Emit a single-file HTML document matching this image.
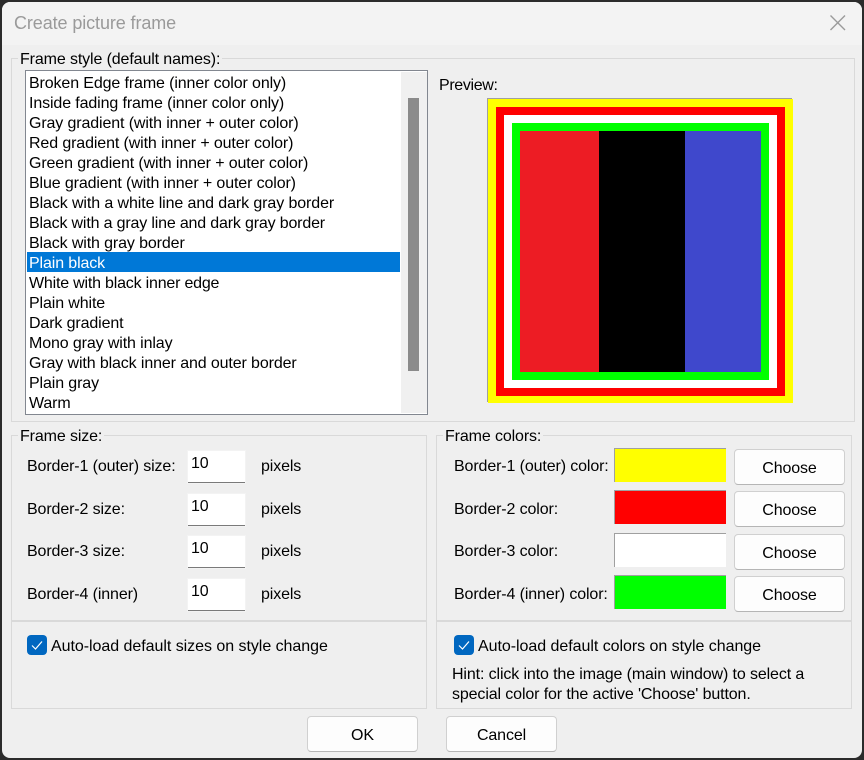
<!DOCTYPE html>
<html><head><meta charset="utf-8"><style>
html,body{margin:0;padding:0;width:864px;height:760px;overflow:hidden;background:#2b2b2b}
*{box-sizing:border-box}
.a{position:absolute}
.t{position:absolute;font:16px/20px "Liberation Sans",sans-serif;letter-spacing:-0.12px;color:#000;white-space:nowrap}
#win{position:absolute;left:2px;top:2px;width:860px;height:756px;background:#efefef;border-radius:8px;overflow:hidden}
.g{position:absolute;border:1px solid #d9d9d9}
.leg{position:absolute;background:#efefef;padding:0 2px 0 2px;font:16px/20px "Liberation Sans",sans-serif;letter-spacing:-0.12px;white-space:nowrap}
.e{position:absolute;width:57px;height:32px;background:#fff;border-bottom:1px solid #7a7a7a;font:16px/20px "Liberation Sans",sans-serif;letter-spacing:-0.12px;padding:3px 0 0 3px;box-shadow:0 0 0 1px #f3f3f3}
.c{position:absolute;left:614px;width:112px;height:34px;border-top:1px solid #a0a0a0;border-left:1px solid #a0a0a0}
.b{position:absolute;background:#fdfdfd;border:1px solid #d0d0d0;border-bottom-color:#b5b5b5;border-radius:4px;width:111px;height:36px;text-align:center;font:16px/36px "Liberation Sans",sans-serif;letter-spacing:-0.12px;padding-top:1px}
.k{position:absolute;width:20px;height:20px;background:#0067c0;border-radius:4px}
</style></head><body>
<div id="win" style="left:2px;top:2px"></div>
<div class="a" style="left:2px;top:2px;width:860px;height:43px;background:#f3f3f3;border-radius:8px 8px 0 0"></div>
<div class="t" style="left:14px;top:13px;font-size:18px;color:#9a9a9a;letter-spacing:-0.1px">Create picture frame</div>
<svg class="a" style="left:829px;top:14px" width="18" height="18"><path d="M1.5 1.5L16 16M16 1.5L1.5 16" stroke="#9a9a9a" stroke-width="1.4" fill="none"/></svg>

<div class="g" style="left:11px;top:58px;width:844px;height:364px"></div>
<div class="leg" style="left:18px;top:50px">Frame style (default names):</div>

<div class="a" style="left:25px;top:70px;width:403px;height:345px;background:#fff;border:1px solid #828790"></div>
<div class="a" style="left:401px;top:72px;width:26px;height:341px;background:#f0f0f0"></div>
<div class="a" style="left:408px;top:98px;width:11px;height:273px;background:#8b8b8b"></div>
<div class="a" style="left:27px;top:252px;width:373px;height:20px;background:#0078d7"></div>
<div class="t" style="left:29px;top:74px">Broken Edge frame (inner color only)</div>
<div class="t" style="left:29px;top:94px">Inside fading frame (inner color only)</div>
<div class="t" style="left:29px;top:114px">Gray gradient (with inner + outer color)</div>
<div class="t" style="left:29px;top:134px">Red gradient (with inner + outer color)</div>
<div class="t" style="left:29px;top:154px">Green gradient (with inner + outer color)</div>
<div class="t" style="left:29px;top:174px">Blue gradient (with inner + outer color)</div>
<div class="t" style="left:29px;top:194px;letter-spacing:-0.1px">Black with a white line and dark gray border</div>
<div class="t" style="left:29px;top:214px;letter-spacing:-0.17px">Black with a gray line and dark gray border</div>
<div class="t" style="left:29px;top:234px">Black with gray border</div>
<div class="t" style="left:29px;top:254px;color:#fff">Plain black</div>
<div class="t" style="left:29px;top:274px;letter-spacing:-0.2px">White with black inner edge</div>
<div class="t" style="left:29px;top:294px">Plain white</div>
<div class="t" style="left:29px;top:314px">Dark gradient</div>
<div class="t" style="left:29px;top:334px">Mono gray with inlay</div>
<div class="t" style="left:29px;top:354px">Gray with black inner and outer border</div>
<div class="t" style="left:29px;top:374px">Plain gray</div>
<div class="t" style="left:29px;top:394px">Warm</div>

<div class="t" style="left:439px;top:76px;letter-spacing:-0.35px">Preview:</div>
<div class="a" style="left:487px;top:98px;width:305px;height:1px;background:#a0a0a0"></div>
<div class="a" style="left:487px;top:98px;width:1px;height:304px;background:#a0a0a0"></div>
<div class="a" style="left:488px;top:99px;width:305px;height:304px;background:#ff0"></div>
<div class="a" style="left:496px;top:107px;width:289px;height:289px;background:#f00"></div>
<div class="a" style="left:504px;top:115px;width:273px;height:273px;background:#fff"></div>
<div class="a" style="left:512px;top:123px;width:257px;height:257px;background:#0f0"></div>
<div class="a" style="left:520px;top:131px;width:79px;height:241px;background:#ed1c24"></div>
<div class="a" style="left:599px;top:131px;width:86px;height:241px;background:#000"></div>
<div class="a" style="left:685px;top:131px;width:76px;height:241px;background:#3f48cc"></div>

<div class="g" style="left:11px;top:435px;width:416px;height:187px"></div>
<div class="g" style="left:11px;top:620px;width:416px;height:89px"></div>
<div class="leg" style="left:18px;top:427px">Frame size:</div>
<div class="t" style="left:27px;top:457px">Border-1 (outer) size:</div>
<div class="t" style="left:27px;top:500px">Border-2 size:</div>
<div class="t" style="left:27px;top:542px">Border-3 size:</div>
<div class="t" style="left:27px;top:585px">Border-4 (inner)</div>
<div class="e" style="left:188px;top:451px">10</div>
<div class="e" style="left:188px;top:494px">10</div>
<div class="e" style="left:188px;top:536px">10</div>
<div class="e" style="left:188px;top:579px">10</div>
<div class="t" style="left:261px;top:457px">pixels</div>
<div class="t" style="left:261px;top:500px">pixels</div>
<div class="t" style="left:261px;top:542px">pixels</div>
<div class="t" style="left:261px;top:585px">pixels</div>
<div class="k" style="left:27px;top:635px"></div>
<svg class="a" style="left:27px;top:635px" width="20" height="20"><path d="M5 10.5L8.5 14L15 6.5" stroke="#fff" stroke-width="1.2" fill="none"/></svg>
<div class="t" style="left:51px;top:637px;letter-spacing:-0.04px">Auto-load default sizes on style change</div>

<div class="g" style="left:436px;top:435px;width:416px;height:187px"></div>
<div class="g" style="left:436px;top:620px;width:416px;height:89px"></div>
<div class="leg" style="left:443px;top:427px">Frame colors:</div>
<div class="t" style="left:454px;top:457px">Border-1 (outer) color:</div>
<div class="t" style="left:454px;top:500px">Border-2 color:</div>
<div class="t" style="left:454px;top:542px">Border-3 color:</div>
<div class="t" style="left:454px;top:585px">Border-4 (inner) color:</div>
<div class="c" style="top:448px;background:#ff0"></div>
<div class="c" style="top:490px;background:#f00"></div>
<div class="c" style="top:533px;background:#fff"></div>
<div class="c" style="top:575px;background:#0f0"></div>
<div class="b" style="left:734px;top:449px">Choose</div>
<div class="b" style="left:734px;top:491px">Choose</div>
<div class="b" style="left:734px;top:534px">Choose</div>
<div class="b" style="left:734px;top:576px">Choose</div>
<div class="k" style="left:454px;top:635px"></div>
<svg class="a" style="left:454px;top:635px" width="20" height="20"><path d="M5 10.5L8.5 14L15 6.5" stroke="#fff" stroke-width="1.2" fill="none"/></svg>
<div class="t" style="left:478px;top:637px;letter-spacing:-0.04px">Auto-load default colors on style change</div>
<div class="t" style="left:452px;top:665px">Hint: click into the image (main window) to select a</div>
<div class="t" style="left:452px;top:685px">special color for the active 'Choose' button.</div>

<div class="b" style="left:307px;top:716px">OK</div>
<div class="b" style="left:446px;top:716px">Cancel</div>
</body></html>
